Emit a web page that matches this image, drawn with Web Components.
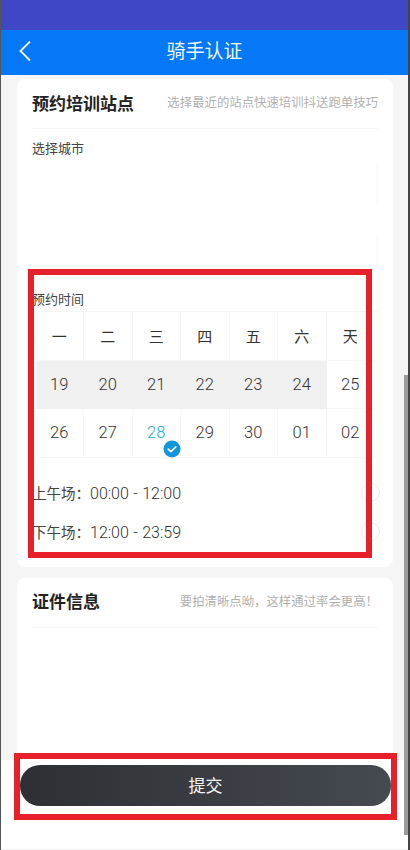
<!DOCTYPE html>
<html lang="zh">
<head>
<meta charset="utf-8">
<title>骑手认证</title>
<style>
    html, body {
        margin: 0;
        height: 100%;
        overflow: hidden;
    }
    body {
        font-family: Roboto, "Noto Sans CJK SC", sans-serif;
        color: #333;
    }
</style>
</head>
<body>
<rider-app>
    <rider-nav slot="nav">骑手认证</rider-nav>

    <form-card title-text="预约培训站点" hint="选择最近的站点快速培训抖送跑单技巧">
        <city-field>选择城市</city-field>
        <week-calendar>预约时间</week-calendar>
        <time-slot label="上午场：">00:00 - 12:00</time-slot>
        <time-slot label="下午场：">12:00 - 23:59</time-slot>
    </form-card>

    <form-card title-text="证件信息" hint="要拍清晰点呦，这样通过率会更高！"></form-card>

    <submit-bar slot="footer">提交</submit-bar>

    <mark-frame slot="overlay" style="left:28px;top:269px;width:344px;height:289px"></mark-frame>
    <mark-frame slot="overlay" style="left:14px;top:753px;width:383px;height:67px"></mark-frame>
</rider-app>

<script>
class RiderApp extends HTMLElement {
    constructor() {
        super();
        this.attachShadow({ mode: 'open' });
        this.shadowRoot.innerHTML = `
            <style>
                :host {
                    display: flex;
                    flex-direction: column;
                    position: relative;
                    box-sizing: border-box;
                    width: 410px;
                    height: 850px;
                    overflow: hidden;
                    background: #f5f5f5;
                    border-left: 1px solid #555;
                    border-right: 2px solid #444;
                }
                .main {
                    flex: 1;
                    min-height: 0;
                    overflow: hidden;
                    display: flex;
                    flex-direction: column;
                    gap: 11px;
                    padding: 4px 15px 0 16px;
                }
                .scrollbar {
                    position: absolute;
                    right: 0;
                    top: 375px;
                    width: 4px;
                    height: 460px;
                    background: #9c9c9c;
                }
            </style>
            <slot name="nav"></slot>
            <div class="main"><slot></slot></div>
            <slot name="footer"></slot>
            <div class="scrollbar"></div>
            <slot name="overlay"></slot>
        `;
    }
}

class RiderNav extends HTMLElement {
    constructor() {
        super();
        this.attachShadow({ mode: 'open' });
        this.shadowRoot.innerHTML = `
            <style>
                :host {
                    display: block;
                    flex: none;
                    background: #3f47c5;
                    padding-top: 30px;
                }
                .bar {
                    position: relative;
                    display: flex;
                    align-items: center;
                    justify-content: center;
                    box-sizing: border-box;
                    height: 45px;
                    padding-bottom: 6px;
                    background: #0478f6;
                    color: #eef6ff;
                    font-size: 19px;
                }
                svg {
                    position: absolute;
                    left: 16px;
                    top: 9px;
                }
            </style>
            <div class="bar">
                <svg width="16" height="24" viewBox="0 0 16 24" fill="none" stroke="#eef6ff" stroke-width="1.8">
                    <path d="M13 2.5 3.5 12l9.5 9.5"></path>
                </svg>
                <slot></slot>
            </div>
        `;
    }
}

class FormCard extends HTMLElement {
    constructor() {
        super();
        this.attachShadow({ mode: 'open' });
    }

    connectedCallback() {
        const titleText = this.getAttribute('title-text') || '';
        const hint = this.getAttribute('hint') || '';

        this.shadowRoot.innerHTML = `
            <style>
                :host {
                    display: block;
                    flex: none;
                    background: #fff;
                    border-radius: 8px;
                    padding: 0 15px 16px;
                }
                :host(:last-of-type) {
                    flex: 1;
                    border-radius: 8px 8px 0 0;
                }
                .head {
                    display: flex;
                    align-items: center;
                    justify-content: space-between;
                    box-sizing: border-box;
                    height: 50px;
                    padding-bottom: 3px;
                    border-bottom: 1px solid #f6f6f6;
                }
                .title {
                    font-size: 17px;
                    font-weight: 700;
                    color: #222;
                }
                .hint {
                    font-size: 12.4px;
                    color: #b0b0b0;
                }
            </style>
            <div class="head">
                <span class="title">${titleText}</span>
                <span class="hint">${hint}</span>
            </div>
            <slot></slot>
        `;
    }
}

class CityField extends HTMLElement {
    constructor() {
        super();
        this.attachShadow({ mode: 'open' });
        this.shadowRoot.innerHTML = `
            <style>
                :host {
                    display: block;
                    position: relative;
                    height: 161px;
                    padding-top: 10px;
                    box-sizing: border-box;
                    font-size: 13px;
                    line-height: 19px;
                    color: #444;
                }
                .tick {
                    position: absolute;
                    right: 0;
                    width: 2px;
                    background: #fafafa;
                }
            </style>
            <slot></slot>
            <div class="tick" style="top:36px;height:38px"></div>
            <div class="tick" style="top:109px;height:32px"></div>
        `;
    }
}

class WeekCalendar extends HTMLElement {
    constructor() {
        super();
        this.attachShadow({ mode: 'open' });

        const weekdays = ['一', '二', '三', '四', '五', '六', '天'];
        const days = ['19', '20', '21', '22', '23', '24', '25', '26', '27', '28', '29', '30', '01', '02'];
        const past = ['19', '20', '21', '22', '23', '24'];

        const weekCells = weekdays.map(d => `<div class="cell week">${d}</div>`).join('');
        const dayCells = days.map(d => {
            const cls = past.includes(d) ? ' past' : (d === '28' ? ' picked' : '');
            const badge = d === '28' ? `
                <svg class="badge" width="18" height="18" viewBox="0 0 18 18">
                    <circle cx="9" cy="9" r="8.5" fill="#1296db"></circle>
                    <path d="M5.2 9.2 7.9 11.6 12.8 7" fill="none" stroke="#fff" stroke-width="1.7" stroke-linecap="round" stroke-linejoin="round"></path>
                </svg>` : '';
            return `<div class="cell${cls}">${d}${badge}</div>`;
        }).join('');

        this.shadowRoot.innerHTML = `
            <style>
                :host {
                    display: block;
                    font-size: 13px;
                    color: #444;
                }
                .label {
                    display: block;
                    line-height: 19px;
                    padding-bottom: 2px;
                }
                .grid {
                    display: grid;
                    grid-template-columns: repeat(7, 48.5px);
                    grid-auto-rows: 48.6px;
                    margin-left: 3.5px;
                    border-top: 1px solid #f5f5f5;
                }
                .cell {
                    position: relative;
                    display: flex;
                    align-items: center;
                    justify-content: center;
                    box-sizing: border-box;
                    border-right: 1px solid #f6f6f6;
                    border-bottom: 1px solid #f6f6f6;
                    font-size: 16.5px;
                    font-weight: 300;
                    color: #333;
                }
                .week {
                    font-size: 15px;
                    font-weight: 400;
                }
                .past {
                    background: #f0f0f0;
                    border-right-color: #f0f0f0;
                    border-bottom-color: #f0f0f0;
                }
                .picked {
                    color: #2aaccd;
                }
                .badge {
                    position: absolute;
                    left: 30px;
                    top: 31px;
                }
            </style>
            <div class="label"><slot></slot></div>
            <div class="grid">${weekCells}${dayCells}</div>
        `;
    }
}

class TimeSlot extends HTMLElement {
    constructor() {
        super();
        this.attachShadow({ mode: 'open' });
    }

    connectedCallback() {
        const label = this.getAttribute('label') || '';

        this.shadowRoot.innerHTML = `
            <style>
                :host {
                    display: flex;
                    align-items: center;
                    justify-content: space-between;
                    height: 39px;
                    font-size: 14.5px;
                    color: #444;
                }
                :host(:first-of-type) {
                    margin-top: 15px;
                }
                .range {
                    font-size: 16px;
                    font-weight: 300;
                    word-spacing: 0.5px;
                    color: #333;
                }
                .radio {
                    box-sizing: border-box;
                    width: 19px;
                    height: 19px;
                    border: 1px solid #ebebeb;
                    border-radius: 50%;
                    margin-right: -2px;
                }
            </style>
            <span>${label}<span class="range"><slot></slot></span></span>
            <span class="radio"></span>
        `;
    }
}

class SubmitBar extends HTMLElement {
    constructor() {
        super();
        this.attachShadow({ mode: 'open' });
        this.shadowRoot.innerHTML = `
            <style>
                :host {
                    display: block;
                    flex: none;
                    position: relative;
                    box-sizing: border-box;
                    height: 90px;
                    padding: 5px 17px 0 19px;
                    background: #fff;
                    border-bottom: 1px solid #eee;
                }
                button {
                    display: block;
                    width: 100%;
                    height: 41px;
                    padding: 0 0 2px;
                    border: none;
                    border-radius: 20px;
                    background: linear-gradient(90deg, #2d2f33, #454a50);
                    color: #f5f5f5;
                    font: inherit;
                    font-size: 17px;
                }
            </style>
            <button type="button"><slot></slot></button>
        `;
    }
}

class MarkFrame extends HTMLElement {
    constructor() {
        super();
        this.attachShadow({ mode: 'open' });
        this.shadowRoot.innerHTML = `
            <style>
                :host {
                    display: block;
                    position: absolute;
                    box-sizing: border-box;
                    border: 6px solid #e8202c;
                    margin-left: -1px;
                    pointer-events: none;
                }
            </style>
        `;
    }
}

customElements.define('rider-app', RiderApp);
customElements.define('rider-nav', RiderNav);
customElements.define('form-card', FormCard);
customElements.define('city-field', CityField);
customElements.define('week-calendar', WeekCalendar);
customElements.define('time-slot', TimeSlot);
customElements.define('submit-bar', SubmitBar);
customElements.define('mark-frame', MarkFrame);
</script>
</body>
</html>
